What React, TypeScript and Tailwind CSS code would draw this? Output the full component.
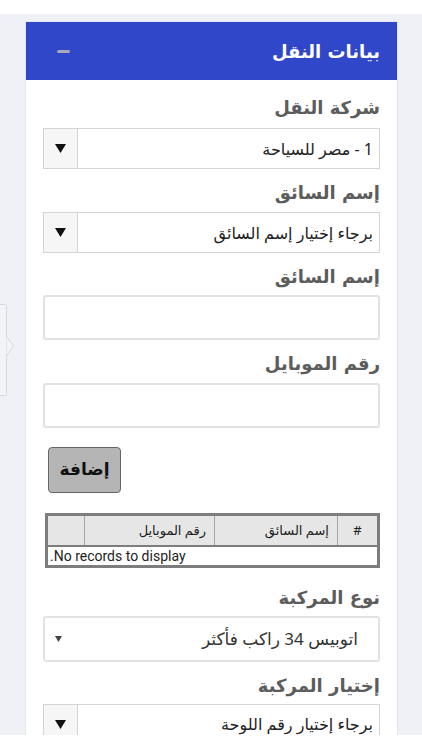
import React from "react"

const ar = { fontFamily: '"Noto Sans", "DejaVu Sans", sans-serif' }
const kufi = { fontFamily: '"DejaVu Sans", sans-serif' }

function Label({ children }: { children: React.ReactNode }) {
  return (
    <div className="text-[18px] leading-[24px] font-semibold text-[#5c5c5c]" style={kufi}>
      {children}
    </div>
  )
}

function BoxSelect({ value }: { value: string }) {
  return (
    <div className="flex h-[41px] border border-[#d4d4d4] bg-white">
      <div className="flex-1 flex items-center pr-[6px] pl-[7px] text-[16px] text-[#222]" style={ar}>
        {value}
      </div>
      <div className="w-[34px] flex items-center justify-center bg-[#f6f6f6] border-r border-[#d4d4d4]">
        <svg width="11" height="9" viewBox="0 0 11 9">
          <path d="M0 0 H11 L5.5 9 Z" fill="#111" />
        </svg>
      </div>
    </div>
  )
}

function TextInput() {
  return <div className="h-[45px] rounded-[3px] border-2 border-[#e2e2e2] bg-white" />
}

export default function App() {
  return (
    <div className="relative w-[422px] h-[750px] bg-white overflow-hidden">
      <div className="mt-[14px] h-[721px] bg-[#f0f1f7] overflow-hidden pt-[7px] pl-[25px] pr-[24px]">
        <div className="bg-white border border-[#e4e6ee]" dir="rtl">
          <div className="h-[58px] bg-[#3047c9] flex items-center justify-between pr-[17px] pl-[31px]">
            <span className="text-white text-[18px] font-semibold" style={kufi}>
              بيانات النقل
            </span>
            <span className="w-[13px] h-[3px] bg-[#a9a9b9] rounded-sm" />
          </div>

          <div className="px-[17px] pt-[16px] pb-[20px] flex flex-col">
            <Label>شركة النقل</Label>
            <div className="mt-[8px]">
              <BoxSelect value="1 - مصر للسياحة" />
            </div>

            <div className="mt-[12px]">
              <Label>إسم السائق</Label>
            </div>
            <div className="mt-[7px]">
              <BoxSelect value="برجاء إختيار إسم السائق" />
            </div>

            <div className="mt-[12px]">
              <Label>إسم السائق</Label>
            </div>
            <div className="mt-[6px]">
              <TextInput />
            </div>

            <div className="mt-[12px]">
              <Label>رقم الموبايل</Label>
            </div>
            <div className="mt-[7px]">
              <TextInput />
            </div>

            <div className="mt-[19px] flex justify-end pl-[5px]">
              <button
                className="w-[73px] h-[46px] rounded-[4px] border border-[#666] bg-[#b5b5b5] text-[17px] font-bold text-[#111]"
                style={kufi}
              >
                إضافة
              </button>
            </div>

            <table className="mt-[20px] w-[335px] border-collapse border-[3px] border-[#7d7d7d] text-[13px] text-[#222]" style={ar}>
              <thead>
                <tr className="bg-[#e6e6e6] h-[31px]">
                  <th className="w-[41px] border border-[#a5a5a5] font-normal text-center">#</th>
                  <th className="w-[123px] border border-[#a5a5a5] font-normal text-right px-[8px]">إسم السائق</th>
                  <th className="w-[130px] border border-[#a5a5a5] font-normal text-right px-[8px]">رقم الموبايل</th>
                  <th className="border border-[#a5a5a5]" />
                </tr>
              </thead>
              <tbody>
                <tr className="h-[20px]">
                  <td
                    colSpan={4}
                    className="text-left px-[2px] text-[14px] leading-[18px] border-t-2 border-[#7d7d7d]"
                    style={{ fontFamily: "Roboto, sans-serif" }}
                  >
                    No records to display.
                  </td>
                </tr>
              </tbody>
            </table>

            <div className="mt-[18px]">
              <Label>نوع المركبة</Label>
            </div>
            <div className="mt-[6px] h-[46px] rounded-[3px] border-2 border-[#e2e2e2] flex items-center pr-[20px] pl-[10px]">
              <span className="flex-1 text-[17px] text-[#333]" style={ar}>
                اتوبيس 34 راكب فأكثر
              </span>
              <svg width="7" height="6" viewBox="0 0 7 6">
                <path d="M0 0 H7 L3.5 6 Z" fill="#444" />
              </svg>
            </div>

            <div className="mt-[12px]">
              <Label>إختيار المركبة</Label>
            </div>
            <div className="mt-[6px]">
              <BoxSelect value="برجاء إختيار رقم اللوحة" />
            </div>
          </div>
        </div>
      </div>

      <div className="absolute left-0 top-[304px] w-[7px] h-[92px] border border-l-0 border-[#d6d8e0] rounded-r-[2px] bg-[#f3f4f8]" />
      <svg className="absolute left-[6px] top-[336px]" width="9" height="20" viewBox="0 0 9 20">
        <path d="M0.5 0 L7.5 10 L0.5 20" fill="#f3f4f8" stroke="#d6d8e0" strokeWidth="1" />
      </svg>
    </div>
  )
}
